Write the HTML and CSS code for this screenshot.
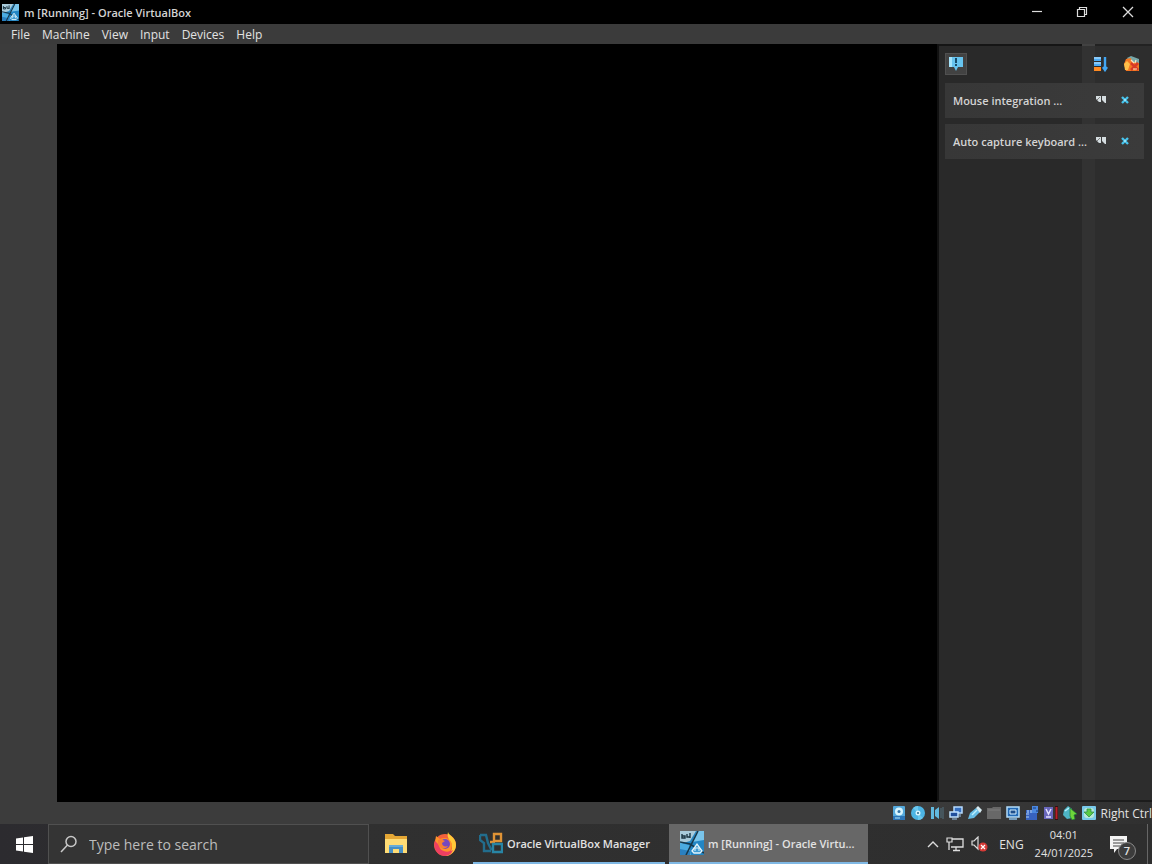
FILE: index.html
```html
<!DOCTYPE html>
<html lang="en">
<head>
    <meta charset="UTF-8">
    <meta name="viewport" content="width=device-width, initial-scale=1.0">
    <title>m [Running] - Oracle VirtualBox</title>
    <link rel="stylesheet" href="styles.css">
</head>
<body>

<!-- shared icons -->
<svg class="defs" width="0" height="0" aria-hidden="true">
    <symbol id="vm" viewBox="0 0 24 24">
        <rect width="24" height="24" rx="1" fill="#2386c4"/>
        <path d="M0 0h16l-6 10-10 3z" fill="#a9cbdb"/>
        <path d="M17 0h7v9l-12 2z" fill="#79c4ea"/>
        <path d="M0 12l9 2 2 10H0z" fill="#4babe0"/>
        <path d="M0 18l10 2v4H0z" fill="#2a80c0"/>
        <path d="M18 0L6 24M0 11l10 2 14 9" stroke="#17384c" stroke-width="1.6" fill="none"/>
        <path d="M2 3v4h3V5H2M7 3v3h3M10 2v5" stroke="#1b3542" stroke-width="1.4" fill="none"/>
        <path d="M12 20l5-7 5 7-2 2h-6z" stroke="#e4f5fc" stroke-width="1.3" fill="#3e9bd2"/>
        <path d="M15 20v-3h4v3" stroke="#e4f5fc" stroke-width="1" fill="none"/>
    </symbol>
    <symbol id="details" viewBox="0 0 10 8">
        <path d="M0 0h5v6H3L0 3zM6 0h4v7H9L6 4z" fill="#d5dde0"/>
        <path d="M1 4l3-3" stroke="#666" stroke-width=".8"/>
    </symbol>
    <symbol id="dismiss" viewBox="0 0 8 8">
        <path d="M1 1l6 6M7 1L1 7" stroke="#47c3ec" stroke-width="2.4"/>
        <path d="M3 4h2" stroke="#b5efff" stroke-width="1.5"/>
    </symbol>
</svg>

<header class="titlebar">
    <svg class="title-icon"><use href="#vm"/></svg>
    <h1>m [Running] - Oracle VirtualBox</h1>
    <div class="window-buttons">
        <button type="button" aria-label="Minimize"><svg width="12" height="12" viewBox="0 0 12 12"><path d="M1 5.500h10" stroke="#ddd" stroke-width="1.2"/></svg></button>
        <button type="button" aria-label="Restore"><svg width="12" height="12" viewBox="0 0 12 12"><path d="M1.500 3.500h7v7h-7zM3.500 3.500v-2h7v7h-2" stroke="#ddd" stroke-width="1.2" fill="none"/></svg></button>
        <button type="button" aria-label="Close"><svg width="12" height="12" viewBox="0 0 12 12"><path d="M1 1l10 10M11 1L1 11" stroke="#ddd" stroke-width="1.3"/></svg></button>
    </div>
</header>

<nav class="menubar">
    <button type="button">File</button>
    <button type="button">Machine</button>
    <button type="button">View</button>
    <button type="button">Input</button>
    <button type="button">Devices</button>
    <button type="button">Help</button>
</nav>

<main class="workspace">
    <div class="screen"></div>
    <aside class="notifications">
        <div class="tools">
            <button type="button" class="bubble" aria-label="Keep finished">
                <svg width="16" height="14" viewBox="0 0 16 14"><path d="M1 0h14v10h-5l-2 4-2-4H1z" fill="#67c4ef"/><path d="M1 0h3v10H1z" fill="#a5e3fa"/><path d="M8 1v5M8 7v2" stroke="#174c6b" stroke-width="2"/></svg>
            </button>
            <button type="button" aria-label="Reverse order">
                <svg width="16" height="16" viewBox="0 0 16 16"><path d="M1 1h7v4H1zM1 6h7v4H1z" fill="#4baaf3"/><path d="M1 2h7M1 7h7" stroke="#c7eaff" stroke-width="1"/><path d="M1 11h7v4H1z" fill="#ff8a21"/><path d="M12 1v12M10 11l2 3 2-3" stroke="#42a6f2" stroke-width="2.4" fill="none"/></svg>
            </button>
            <button type="button" aria-label="Remove finished">
                <svg width="17" height="16" viewBox="0 0 17 16"><path d="M4 2l4-2 8 3v5l-8 1z" fill="#77a7a8"/><path d="M1 8l2-5 5-1 1 4 7 1v8H3z" fill="#f47822"/><path d="M1 8l3-3 3 3-2 6H2z" fill="#ffc04a"/><path d="M8 7l7 7M15 7l-7 7" stroke="#d83a28" stroke-width="2.500"/><path d="M8 4l3 3M13 4l-1 3M10 13h4" stroke="#ffe1bd" stroke-width="1.2"/></svg>
            </button>
        </div>
        <section class="note">
            <h2>Mouse integration ...</h2>
            <button type="button" aria-label="Show details"><svg width="10" height="8"><use href="#details"/></svg></button>
            <button type="button" aria-label="Dismiss"><svg width="8" height="8"><use href="#dismiss"/></svg></button>
        </section>
        <section class="note">
            <h2>Auto capture keyboard ...</h2>
            <button type="button" aria-label="Show details"><svg width="10" height="8"><use href="#details"/></svg></button>
            <button type="button" aria-label="Dismiss"><svg width="8" height="8"><use href="#dismiss"/></svg></button>
        </section>
    </aside>
</main>

<footer class="statusbar">
    <!-- hard disk -->
    <svg viewBox="0 0 14 14"><rect x="1" width="12" height="14" rx="1" fill="#54a9dc"/><path d="M1 10h12v4H1z" fill="#2c75b8"/><circle cx="7" cy="5.500" r="4" fill="#d8f5ff"/><circle cx="7" cy="5.500" r="1.500" fill="#3274a8"/><path d="M3 12h5" stroke="#b2ecff"/></svg>
    <!-- optical disc -->
    <svg viewBox="0 0 14 14"><circle cx="7" cy="7" r="7" fill="#4db5e5"/><path d="M7 7L2 2a7 7 0 0 1 5-2zM7 7l5 5a7 7 0 0 1-5 2z" fill="#6bc8ee"/><circle cx="7" cy="7" r="2.500" fill="#d9f5ff"/><circle cx="7" cy="7" r="1" fill="#28688d"/></svg>
    <!-- audio -->
    <svg viewBox="0 0 14 14"><path d="M1 1h3v12H1zM5 4l4-3v12l-4-3z" fill="#62b9de"/><path d="M11 2v10M13 1v12" stroke="#52717e"/></svg>
    <!-- network -->
    <svg viewBox="0 0 14 14"><path d="M5 1h8v6H5z" fill="#356fc0" stroke="#b6dcff" stroke-width="1.5"/><path d="M1 6h8v5H1z" fill="#204f9c" stroke="#c1e3ff" stroke-width="1.5"/><path d="M3 13h5M11 8v3" stroke="#9cc5ec"/></svg>
    <!-- usb -->
    <svg viewBox="0 0 14 14"><path d="M0 13l2-6 6-5 4 4-6 6z" fill="#66bde5"/><path d="M8 2l2-2 4 4-2 3z" fill="#d9edf4"/><path d="M4 9l5-5" stroke="#bcf0ff" stroke-width="1.5"/></svg>
    <!-- shared folders -->
    <svg viewBox="0 0 14 14"><path d="M0 2h5l1-1h8v12H0z" fill="#686868"/><path d="M1 4h12" stroke="#7c7c7c"/></svg>
    <!-- display -->
    <svg viewBox="0 0 14 14"><path d="M1 1h12v10H1z" fill="#2269b5" stroke="#b4ddfa" stroke-width="1.5"/><path d="M4 4h6v4H4z" fill="#1e4e8b" stroke="#d6f0ff"/><path d="M3 13h8" stroke="#8cbfe9" stroke-width="1.5"/></svg>
    <!-- recording -->
    <svg viewBox="0 0 14 14"><path d="M1 4h11v10H1z" fill="#3762bf"/><path d="M3 4v3M6 4v3M1 8h3M1 11h3" stroke="#abcdf5" stroke-width="1.2"/><path d="M7 0h6v7H7z" fill="#4a87df"/><path d="M8 2h3M11 5h3" stroke="#173a77"/></svg>
    <!-- processor load -->
    <svg viewBox="0 0 14 14"><path d="M0 1h9v12H0z" fill="#6967bc"/><path d="M2 3l2.500 5L7 3M2 11h5" stroke="#e3e2ff" stroke-width="1.5" fill="none"/><path d="M11 0h3v14h-3z" fill="#321012"/><path d="M12.500 1v12" stroke="#b91f26" stroke-width="2"/></svg>
    <!-- mouse -->
    <svg viewBox="0 0 14 14"><path d="M1 4l4-4 4 3v9l-5 1-4-4z" fill="#4eb5c6"/><path d="M2 5l4-3" stroke="#b8efff" stroke-width="1.5"/><path d="M7 2l7 6-3 1 1 4-3 1-2-4z" fill="#6ed53a" stroke="#1a7a37" stroke-width=".7"/></svg>
    <!-- host key -->
    <svg viewBox="0 0 14 14"><rect width="14" height="14" rx="1" fill="#78c9eb"/><rect x="2" y="2" width="10" height="10" rx="3" fill="#b8e9d5"/><path d="M5 3h4v3h3l-5 5-5-5h3z" fill="#5acb45" stroke="#258447" stroke-width=".7"/></svg>
    <span>Right Ctrl</span>
</footer>

<div class="taskbar">
    <button type="button" class="start" aria-label="Start">
        <svg width="17" height="17" viewBox="0 0 17 17"><path d="M0 2.500l7-1V8H0zM8 1.300L17 0v8H8zM0 9h7v6.500l-7-1zM8 9h9v8l-9-1.300z" fill="#fff"/></svg>
    </button>
    <label class="search">
        <svg width="18" height="18" viewBox="0 0 18 18"><circle cx="11" cy="6.500" r="5" stroke="#c8c8c8" stroke-width="1.500" fill="none"/><path d="M7.500 10L1 17" stroke="#c8c8c8" stroke-width="1.500"/></svg>
        <input type="text" placeholder="Type here to search" aria-label="Search">
    </label>
    <button type="button" class="pinned" aria-label="File Explorer">
        <svg width="24" height="20" viewBox="0 0 24 20"><path d="M1 0h8l2 2h12v17H1z" fill="#e5a735"/><path d="M1 5h22v14H1z" fill="#ffdc75"/><path d="M5 19v-8h14v8h-4v-4H9v4z" fill="#478fc5"/><path d="M5 11h14v2H5z" fill="#67acd9"/></svg>
    </button>
    <button type="button" class="pinned" aria-label="Firefox">
        <svg width="24" height="24" viewBox="0 0 24 24"><circle cx="12" cy="13" r="11" fill="#f4603c"/><path d="M15 0c1 4 8 5 8 13 0 6-5 11-11 11 5-2 7-5 7-9 0-6-6-8-4-15z" fill="#ffcb38"/><path d="M3 4l4 3c5-2 10-1 12 5 0 7-4 9-8 9C3 21 1 13 3 4z" fill="#ff922a"/><path d="M2 9c-2 7 2 14 9 15 5 0 8-3 9-6-7 4-14 0-14-5z" fill="#ee3f62"/><circle cx="12" cy="12" r="5" fill="#7648bf"/><path d="M5 8c3-1 5 0 7 1l-3 2c0 3 3 4 6 3-2 4-9 3-10-2z" fill="#f77f31"/></svg>
    </button>
    <button type="button" class="task manager">
        <svg width="24" height="24" viewBox="0 0 24 24"><path d="M1 4h6l2 8 3 6h3M1 4v5l4 3v8h7" stroke="#226d8d" stroke-width="2.400" fill="none"/><path d="M15 3h7v7h-7zM11 11h5" stroke="#e09335" stroke-width="2.400" fill="none"/><path d="M14 13h9v8h-9z" stroke="#2885a5" stroke-width="2.400" fill="none"/></svg>
        <span>Oracle VirtualBox Manager</span>
    </button>
    <button type="button" class="task active">
        <svg width="24" height="24"><use href="#vm"/></svg>
        <span>m [Running] - Oracle Virtu...</span>
    </button>
    <div class="tray">
        <button type="button" aria-label="Show hidden icons"><svg width="12" height="8" viewBox="0 0 12 8"><path d="M1 7l5-5 5 5" stroke="#ddd" stroke-width="1.4" fill="none"/></svg></button>
        <button type="button" aria-label="Network"><svg width="18" height="16" viewBox="0 0 18 16"><path d="M6 3h11v8H5M3 6v8M10 11v3M7 14.500h7" stroke="#ddd" stroke-width="1.3" fill="none"/><path d="M1 2h5v4H1z" fill="#303030" stroke="#ddd" stroke-width="1.2"/></svg></button>
        <button type="button" aria-label="Volume"><svg width="17" height="16" viewBox="0 0 17 16"><path d="M1 5h2l4-4v12l-4-4H1z" stroke="#ddd" stroke-width="1.2" fill="none"/><circle cx="12" cy="11" r="4.500" fill="#d53a36"/><path d="M10 9l4 4M14 9l-4 4" stroke="#fff" stroke-width="1.2"/></svg></button>
        <button type="button" class="lang">ENG</button>
        <button type="button" class="clock"><time>04:01</time><time>24/01/2025</time></button>
        <button type="button" class="action" aria-label="Notifications, 7 new">
            <svg width="17" height="17" viewBox="0 0 17 17"><path d="M0 0h17v13H7l-3 4v-4H0z" fill="#f3f3f3"/><path d="M3 4h11M3 7h11M3 10h7" stroke="#444"/></svg>
            <span class="badge">7</span>
        </button>
    </div>
</div>

</body>
</html>
```
FILE: styles.css
```css
* {
    box-sizing: border-box;
}
body {
    font-family: "Open Sans", "Noto Sans", sans-serif;
    font-size: 11px;
    margin: 0;
    min-height: 100vh;
    display: flex;
    flex-direction: column;
    background-color: #000;
    color: #e2e2e2;
}
button {
    display: flex;
    align-items: center;
    justify-content: center;
    padding: 0;
    border: 0;
    background: none;
    color: inherit;
    font: inherit;
    white-space: nowrap;
}
svg {
    flex: none;
    display: block;
}
h1, h2 {
    margin: 0;
    font-size: 11px;
    font-weight: 600;
    color: #d4d4d4;
    white-space: nowrap;
}
.defs {
    position: absolute;
}

/* window frame */
.titlebar {
    display: flex;
    align-items: center;
    height: 24px;
    padding-left: 2px;
    gap: 5px;
}
.title-icon {
    width: 17px;
    height: 17px;
}
.window-buttons {
    display: flex;
    height: 22px;
    margin-left: auto;
}
.window-buttons button {
    width: 45px;
}
.window-buttons button:last-child {
    width: 48px;
}
.menubar {
    display: flex;
    height: 20px;
    padding-left: 11px;
    gap: 12px;
    font-size: 12px;
    background-color: #3b3b3b;
}

/* guest screen and side panel */
.workspace {
    flex: 1;
    display: flex;
    padding-left: 57px;
    background-color: #3c3c3c;
}
.screen {
    flex: 1;
    background-color: #000;
}
.notifications {
    width: 215px;
    padding: 9px 8px 0 6px;
    border-left: 2px solid #111;
    border-bottom: 2px solid #1c1c1c;
    background:
        linear-gradient(90deg, #151515 143px, #424242 143px, #424242 156px, #222 156px) 0 0 / 100% 2px no-repeat,
        linear-gradient(90deg, #292929 143px, #323232 143px, #323232 156px, #2d2d2d 156px);
}
.tools {
    display: flex;
    align-items: center;
    height: 22px;
    gap: 14px;
    padding-right: 4px;
    margin-bottom: 8px;
}
.bubble {
    width: 22px;
    height: 22px;
    margin-right: auto;
    border: 1px solid #505050;
    background-color: #424242;
}
.note {
    display: flex;
    height: 35px;
    margin-bottom: 6px;
    padding: 0 7px 0 8px;
    background: linear-gradient(90deg, #373737, #3b3b3b);
}
.note h2 {
    flex: 1;
    min-width: 0;
    line-height: 36px;
}
.note button {
    flex: none;
    width: 24px;
    height: 33px;
}

.statusbar {
    display: flex;
    align-items: center;
    justify-content: flex-end;
    height: 22px;
    gap: 5px;
    font-size: 12px;
    background: linear-gradient(90deg, #3c3c3c 78%, #303030);
}
.statusbar svg {
    width: 14px;
    height: 14px;
}

/* desktop taskbar */
.taskbar {
    display: flex;
    height: 40px;
    background: linear-gradient(90deg, #2c2b2f, #303030 30%, #2e2e2e);
}
.start {
    width: 48px;
}
.search {
    display: flex;
    align-items: center;
    gap: 11px;
    width: 321px;
    padding-left: 11px;
    border: 1px solid #505050;
    background-color: #343434;
}
.search input {
    flex: 1;
    min-width: 0;
    padding: 0;
    border: 0;
    outline: 0;
    background: none;
    color: #ddd;
    font: 14px "Open Sans", sans-serif;
}
.search input::placeholder {
    color: #bcbcbc;
    opacity: 1;
}
.pinned {
    width: 49px;
    margin-left: 2px;
}
.pinned + .pinned {
    margin-left: 0;
}
.task {
    justify-content: flex-start;
    gap: 4px;
    font-weight: 600;
    border-bottom: 2px solid #7fb8e4;
}
.manager {
    width: 192px;
    margin: 0 4px;
    padding-left: 6px;
}
.active {
    width: 199px;
    padding-left: 11px;
    background-color: #676767;
}
.tray {
    display: flex;
    align-items: center;
    margin-left: auto;
    gap: 7px;
    padding-right: 4px;
}
.lang {
    margin: 0 4px;
    font-size: 12px;
}
.clock {
    flex-direction: column;
    line-height: 18px;
}
.action {
    position: relative;
    width: 48px;
    height: 40px;
    padding-right: 10px;
    border-right: 1px solid #666;
}
.badge {
    position: absolute;
    left: 18px;
    top: 18px;
    width: 18px;
    height: 18px;
    border: 1px solid #8a8a8a;
    border-radius: 50%;
    background-color: #3c3c3c;
    font-weight: 600;
    line-height: 16px;
    text-align: center;
}
```
